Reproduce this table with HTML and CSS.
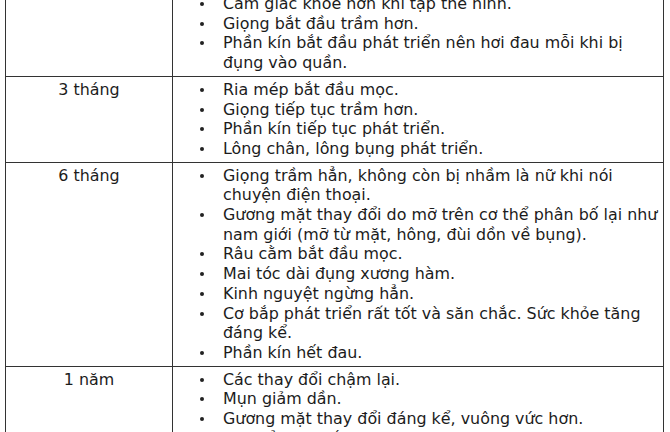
FILE: index.html
```html
<!DOCTYPE html>
<html lang="vi">
<head>
<meta charset="utf-8">
<title>Thay đổi theo thời gian</title>
<link rel="stylesheet" href="styles.css">
</head>
<body>
<table class="timeline">
  <colgroup><col class="col-period"><col class="col-changes"></colgroup>
  <tbody>
    <tr>
      <td class="period"></td>
      <td class="changes">
        <ul>
          <li>Cảm giác khỏe hơn khi tập thể hình.</li>
          <li>Giọng bắt đầu trầm hơn.</li>
          <li>Phần kín bắt đầu phát triển nên hơi đau mỗi khi bị đụng vào quần.</li>
        </ul>
      </td>
    </tr>
    <tr>
      <td class="period">3 tháng</td>
      <td class="changes">
        <ul>
          <li>Ria mép bắt đầu mọc.</li>
          <li>Giọng tiếp tục trầm hơn.</li>
          <li>Phần kín tiếp tục phát triển.</li>
          <li>Lông chân, lông bụng phát triển.</li>
        </ul>
      </td>
    </tr>
    <tr>
      <td class="period">6 tháng</td>
      <td class="changes">
        <ul>
          <li>Giọng trầm hẳn, không còn bị nhầm là nữ khi nói chuyện điện thoại.</li>
          <li>Gương mặt thay đổi do mỡ trên cơ thể phân bố lại như nam giới (mỡ từ mặt, hông, đùi dồn về bụng).</li>
          <li>Râu cằm bắt đầu mọc.</li>
          <li>Mai tóc dài đụng xương hàm.</li>
          <li>Kinh nguyệt ngừng hẳn.</li>
          <li>Cơ bắp phát triển rất tốt và săn chắc. Sức khỏe tăng đáng kể.</li>
          <li>Phần kín hết đau.</li>
        </ul>
      </td>
    </tr>
    <tr>
      <td class="period">1 năm</td>
      <td class="changes">
        <ul>
          <li>Các thay đổi chậm lại.</li>
          <li>Mụn giảm dần.</li>
          <li>Gương mặt thay đổi đáng kể, vuông vức hơn.</li>
          <li>Cơ thể săn chắc hơn.</li>
        </ul>
      </td>
    </tr>
  </tbody>
</table>
</body>
</html>
```
FILE: styles.css
```css
html, body {
  margin: 0;
  padding: 0;
  background: #ffffff;
}
body {
  font-family: "DejaVu Sans", Verdana, sans-serif;
  font-size: 15.9px;
  color: #1c1c1c;
  overflow: hidden;
}
.timeline {
  border-collapse: collapse;
  table-layout: fixed;
  width: 659px;
  margin: -10px 0 0 5px;
}
.col-period {
  width: 167px;
}
.timeline td {
  border: 1px solid #333333;
  vertical-align: top;
  line-height: 19.7px;
  padding: 3px 0 3px 8px;
}
.timeline td.period {
  text-align: center;
  padding-left: 4px;
  padding-right: 4px;
}
.changes ul {
  list-style: none;
  margin: 0 -2px 0 0;
  padding: 0;
}
.changes li {
  display: flex;
}
.changes li::before {
  content: "";
  flex: 0 0 4px;
  height: 4px;
  margin: 8px 19px 0 19px;
  border-radius: 50%;
  background: #222222;
}
```
